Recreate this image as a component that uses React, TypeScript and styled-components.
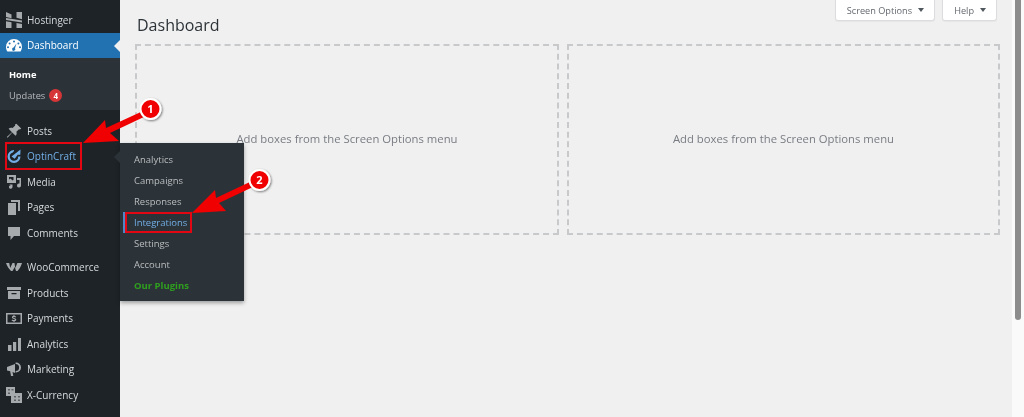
import { createGlobalStyle } from "styled-components";
import styled from "styled-components";
import type { ReactNode } from "react";

const GlobalStyle = createGlobalStyle`
    html, body {
        margin: 0;
        padding: 0;
        height: 417px;
        overflow: hidden;
        background: #f0f0f1;
        font-family: "Open Sans", "Noto Sans", sans-serif;
    }
`;

const Page = styled.div`
    position: relative;
    display: flex;
    width: 1024px;
    height: 417px;
    overflow: hidden;
    background: #f0f0f1;
    filter: blur(0.35px);
`;

const Sidebar = styled.nav`
    flex: 0 0 120px;
    background: #1d2327;
    padding-top: 7px;
    color: #d7dadc;
    font-size: 10px;
`;

const MenuRow = styled.div<{ $active?: boolean; $link?: boolean; $gapAfter?: number }>`
    position: relative;
    display: flex;
    align-items: center;
    gap: 5px;
    height: 25.5px;
    padding-left: 6px;
    margin-bottom: ${(p) => p.$gapAfter ?? 0}px;
    background: ${(p) => (p.$active ? "#2271b1" : "transparent")};
    color: ${(p) => (p.$active ? "#fff" : p.$link ? "#72aee6" : "#d7dadc")};

    &::after {
        content: ${(p) => (p.$active ? '""' : "none")};
        position: absolute;
        right: 0;
        top: 7px;
        border: 6px solid transparent;
        border-right-color: #f0f0f1;
        border-left-width: 0;
    }
`;

const IconSlot = styled.span<{ $color?: string }>`
    flex: 0 0 16px;
    width: 16px;
    height: 16px;
    color: ${(p) => p.$color ?? "#a7aaad"};

    svg {
        display: block;
        width: 16px;
        height: 16px;
        fill: currentColor;
    }
`;

const SubMenu = styled.div`
    display: flex;
    flex-direction: column;
    height: 52px;
    padding: 6px 0 0 9px;
    margin-bottom: 8px;
    box-sizing: border-box;
    background: #2c3338;
`;

const SubItem = styled.div<{ $current?: boolean }>`
    display: flex;
    align-items: center;
    gap: 4px;
    height: 21px;
    font-size: 9.3px;
    font-weight: ${(p) => (p.$current ? 700 : 400)};
    color: ${(p) => (p.$current ? "#fff" : "#b4b9be")};
`;

const Badge = styled.span`
    display: inline-flex;
    align-items: center;
    justify-content: center;
    width: 13px;
    height: 13px;
    border-radius: 50%;
    background: #d63638;
    color: #fff;
    font-size: 8px;
    font-weight: 700;
`;

const Flyout = styled.div`
    position: absolute;
    left: 120px;
    top: 143px;
    width: 124px;
    height: 158px;
    box-sizing: border-box;
    padding-top: 6px;
    background: #2c3338;
    box-shadow: 0 2px 4px rgba(0, 0, 0, 0.35);

    &::before {
        content: "";
        position: absolute;
        left: -6px;
        top: 8px;
        border: 6px solid transparent;
        border-right-color: #2c3338;
        border-left-width: 0;
    }
`;

const FlyoutItem = styled.div<{ $current?: boolean; $promo?: boolean }>`
    display: flex;
    align-items: center;
    height: 21px;
    font-size: 9.5px;
    font-weight: ${(p) => (p.$promo ? 700 : 400)};
    color: ${(p) => (p.$promo ? "#2ea01e" : p.$current ? "#72aee6" : "#b9bdc0")};
    box-shadow: ${(p) => (p.$current ? "inset 2px 0 0 #4f86c6" : "none")};
    margin-left: ${(p) => (p.$current ? "3px" : "0")};
    padding-left: ${(p) => (p.$current ? "11px" : "14px")};
`;

const Main = styled.main`
    flex: 1;
    display: flex;
    flex-direction: column;
    min-width: 0;
    padding: 0 24px 0 15px;
`;

const TopButtons = styled.div`
    display: flex;
    justify-content: flex-end;
    gap: 7px;
    height: 0;
    padding-right: 3px;
`;

const TabButton = styled.div`
    display: flex;
    align-items: center;
    gap: 6px;
    height: 20px;
    padding: 0 10px 0 11px;
    background: #fff;
    border: 1px solid #dcdcde;
    border-top: 0;
    border-radius: 0 0 3px 3px;
    box-shadow: 0 1px 1px rgba(0, 0, 0, 0.04);
    color: #646970;
    font-size: 9.2px;

    &::after {
        content: "";
        border: 3.5px solid transparent;
        border-top: 4px solid #50575e;
        border-bottom-width: 0;
    }
`;

const Heading = styled.h1`
    margin: 14px 0 0 2px;
    height: 30px;
    line-height: 23px;
    font-size: 16px;
    font-weight: 400;
    color: #2c3338;
`;

const Columns = styled.div`
    display: grid;
    grid-template-columns: 424px 433px;
    gap: 8px;
`;

const DropBox = styled.div`
    display: flex;
    align-items: center;
    justify-content: center;
    height: 191px;
    padding-bottom: 2px;
    box-sizing: border-box;
    border: 2px dashed #c8c9cb;
    color: #787c82;
    font-size: 11.3px;
`;

const ScrollTrack = styled.div`
    position: absolute;
    left: 1012px;
    top: 0;
    width: 12px;
    height: 417px;
    background: #fafafa;
`;

const ScrollThumb = styled.div`
    position: absolute;
    left: 3px;
    top: 0;
    width: 6px;
    height: 320px;
    border-radius: 0 0 3px 3px;
    background: #8c8c8c;
`;

const Callouts = styled.svg`
    position: absolute;
    left: 0;
    top: 0;
    width: 1024px;
    height: 417px;
    pointer-events: none;
`;

const Highlight = styled.div<{ $x: number; $y: number; $w: number; $h: number }>`
    position: absolute;
    left: ${(p) => p.$x}px;
    top: ${(p) => p.$y}px;
    width: ${(p) => p.$w}px;
    height: ${(p) => p.$h}px;
    box-sizing: border-box;
    border: 2.5px solid #e30613;
`;

const HostingerIcon = () => (
    <svg viewBox="0 0 16 16">
        <path d="M0 0l5.500 2.500v3.700L0 5zM10.500 0H16v7.200l-5.500-1.400zM0 6l16 2.500v2L0 8zM0 9.200l5.500 1V16H0zM10.500 11l5.500 1v4h-5.500z" />
    </svg>
);

const GaugeIcon = () => (
    <svg viewBox="0 0 16 16">
        <path d="M8 2a8 8 0 0 0-8 8c0 1.700.5 3.200 1.400 4.500h13.200A8 8 0 0 0 16 10a8 8 0 0 0-8-8zm0 1.600a1 1 0 1 1 0 2 1 1 0 0 1 0-2zM3.600 5.400a1 1 0 1 1 0 2 1 1 0 0 1 0-2zm8.800 0a1 1 0 1 1 0 2 1 1 0 0 1 0-2zM2 9.200a1 1 0 1 1 0 2 1 1 0 0 1 0-2zm12 0a1 1 0 1 1 0 2 1 1 0 0 1 0-2zM10.500 6.500L9 11.200a1.600 1.600 0 1 1-1.400-.6z" />
    </svg>
);

const PinIcon = () => (
    <svg viewBox="0 0 16 16">
        <path d="M10.400.8l4.800 4.800-1.200 1-1-.4-2.600 2.600c.6 1.600.2 3-.8 4L6.200 9.400 1.600 14.800l-.8-.8 5.200-4.800L2.600 5.800c1-1 2.400-1.400 4-.8l2.600-2.600-.2-1z" />
    </svg>
);

const OptinIcon = () => (
    <svg viewBox="0 0 16 16">
        <path d="M8 2a6.500 6.500 0 1 0 6.500 6.500h-2.300A4.200 4.200 0 1 1 6.800 4.500L8 3z" />
        <path d="M14.500 1.500L5.500 8.500l3.200 2.200 3-4h2.600z" />
    </svg>
);

const MediaIcon = () => (
    <svg viewBox="0 0 16 16">
        <path
            d="M1 1h9v8H1zm2 2v2.500l1.500-1 2 2 1-.7V3zM11 4h4v7.500a2 2 0 1 1-1.500-1.900V6H11zM3 10.500h3.500V13a1.800 1.800 0 1 1-1.500-1.800z"
            fillRule="evenodd"
        />
    </svg>
);

const PagesIcon = () => (
    <svg viewBox="0 0 16 16">
        <path d="M5 1h9v11h-2V3H5zM2 4h8v12H2z" />
    </svg>
);

const CommentIcon = () => (
    <svg viewBox="0 0 16 16">
        <path d="M2 2h12v9H8l-3.500 4v-4H2z" />
    </svg>
);

const WooIcon = () => (
    <svg viewBox="0 0 16 16">
        <path d="M0 4h3.200l1 5 2.300-5h2l.7 5 2.200-5H16c-1 3-2.500 6-4.500 8H10L8.800 8 6.500 12H5C3 10 1 7 0 4z" />
    </svg>
);

const BoxIcon = () => (
    <svg viewBox="0 0 16 16">
        <path d="M1 2h14v3H1zM2 6h12v8H2zm3.500 2v1.200h5V8z" fillRule="evenodd" />
    </svg>
);

const PaymentsIcon = () => (
    <svg viewBox="0 0 16 16">
        <path d="M0 3h16v11H0zm1.500 1.500v8h13v-8z" fillRule="evenodd" />
        <path d="M8.500 5v.9c.8.1 1.400.4 1.700.7l-.6 1c-.5-.4-1-.6-1.600-.6-.5 0-.7.2-.7.4 0 .7 3 .5 3 2.300 0 .8-.6 1.400-1.800 1.500v.8h-1v-.8c-.8-.1-1.500-.4-2-.8l.7-1c.5.4 1.200.7 1.900.7.5 0 .8-.2.8-.5 0-.8-3-.5-3-2.300 0-.8.6-1.400 1.600-1.500V5z" />
    </svg>
);

const BarsIcon = () => (
    <svg viewBox="0 0 16 16">
        <path d="M2 9h3.500v6H2zM7 6h3.200v9H7zM12 2h3v13h-3z" />
    </svg>
);

const MegaphoneIcon = () => (
    <svg viewBox="0 0 16 16">
        <path d="M1 6l8-3v9L6.500 11l.8 4H5l-.8-4.800L1 9.500z" />
        <path d="M10 1.500a5 5 0 1 1 0 10h-.4V10a3.500 3.500 0 0 0 0-7V1.500z" />
    </svg>
);

const CurrencyIcon = () => (
    <svg viewBox="0 0 16 16">
        <path d="M0 0h9v9H0zM5 6h11v10H5z" />
        <path
            d="M2 2h2v1.500H2zM5.500 2h2v1.500h-2zM2 5.500h2V7H2zM8 9h2v1.500H8zM12 9h2v1.500h-2zM8 12.500h2V14H8zM12 12.500h2V14h-2z"
            fill="#5c6166"
        />
    </svg>
);

interface MenuItem {
    label: string;
    icon: ReactNode;
    color?: string;
    link?: boolean;
    gapAfter?: number;
}

const topItems: MenuItem[] = [
    { label: "Posts", icon: <PinIcon /> },
    { label: "OptinCraft", icon: <OptinIcon />, color: "#72aee6", link: true },
    { label: "Media", icon: <MediaIcon /> },
    { label: "Pages", icon: <PagesIcon /> },
    { label: "Comments", icon: <CommentIcon />, gapAfter: 9 },
    { label: "WooCommerce", icon: <WooIcon /> },
    { label: "Products", icon: <BoxIcon /> },
    { label: "Payments", icon: <PaymentsIcon /> },
    { label: "Analytics", icon: <BarsIcon /> },
    { label: "Marketing", icon: <MegaphoneIcon /> },
    { label: "X-Currency", icon: <CurrencyIcon /> },
];

const flyoutItems = ["Analytics", "Campaigns", "Responses", "Integrations", "Settings", "Account"];

export default function App() {
    return (
        <Page>
            <GlobalStyle />
            <Sidebar>
                <MenuRow>
                    <IconSlot>
                        <HostingerIcon />
                    </IconSlot>
                    Hostinger
                </MenuRow>
                <MenuRow $active>
                    <IconSlot $color="#fff">
                        <GaugeIcon />
                    </IconSlot>
                    Dashboard
                </MenuRow>
                <SubMenu>
                    <SubItem $current>Home</SubItem>
                    <SubItem>
                        Updates <Badge>4</Badge>
                    </SubItem>
                </SubMenu>
                {topItems.map((item) => (
                    <MenuRow key={item.label} $link={item.link} $gapAfter={item.gapAfter}>
                        <IconSlot $color={item.color}>{item.icon}</IconSlot>
                        {item.label}
                    </MenuRow>
                ))}
            </Sidebar>
            <Flyout>
                {flyoutItems.map((label) => (
                    <FlyoutItem key={label} $current={label === "Integrations"}>
                        {label}
                    </FlyoutItem>
                ))}
                <FlyoutItem $promo>Our Plugins</FlyoutItem>
            </Flyout>
            <Main>
                <TopButtons>
                    <TabButton>Screen Options</TabButton>
                    <TabButton>Help</TabButton>
                </TopButtons>
                <Heading>Dashboard</Heading>
                <Columns>
                    <DropBox>Add boxes from the Screen Options menu</DropBox>
                    <DropBox>Add boxes from the Screen Options menu</DropBox>
                </Columns>
            </Main>
            <ScrollTrack>
                <ScrollThumb />
            </ScrollTrack>
            <Highlight $x={5} $y={142} $w={77} $h={28} />
            <Highlight $x={125} $y={212} $w={67} $h={21} />
            <Callouts viewBox="0 0 1024 417">
                <defs>
                    <filter id="pin" x="-40%" y="-40%" width="180%" height="180%">
                        <feDropShadow dx="1" dy="1" stdDeviation="1" floodOpacity="0.5" />
                    </filter>
                </defs>
                <path d="M83 143L105 120 106 128 143 111 146 116 110 133 119 141Z" fill="#f00000" />
                <path d="M192 213L215 190 216 198 252 181 255 186 219 203 226 211Z" fill="#f00000" />
                <g filter="url(#pin)">
                    <circle cx="150.500" cy="109" r="10" fill="#f00000" stroke="#fff" strokeWidth="2" />
                    <circle cx="259.500" cy="180" r="10" fill="#f00000" stroke="#fff" strokeWidth="2" />
                </g>
                <text x="150.500" y="113" textAnchor="middle" fontSize="11" fontWeight="700" fill="#fff">
                    1
                </text>
                <text x="259.500" y="184" textAnchor="middle" fontSize="11" fontWeight="700" fill="#fff">
                    2
                </text>
            </Callouts>
        </Page>
    );
}
